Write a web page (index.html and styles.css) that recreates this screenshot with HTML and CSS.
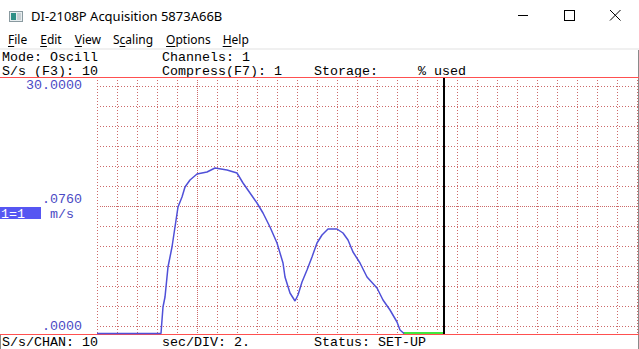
FILE: index.html
```html
<!DOCTYPE html>
<html>
<head>
	<meta charset="utf-8">
	<title>DI-2108P Acquisition 5873A66B</title>
	<link rel="stylesheet" href="styles.css">
</head>
<body>
	<div class="window">
		<header class="titlebar">
			<svg class="app_icon" width="14" height="11" viewBox="0 0 14 11">
				<rect x="0.5" y="0.5" width="13" height="10" fill="#e8eef0" stroke="#8a9aa0"/>
				<rect x="2" y="2" width="5" height="7" fill="#2f8f86"/>
				<rect x="8" y="2" width="4" height="7" fill="#c8d0d4"/>
			</svg>
			<span class="title">DI-2108P Acquisition 5873A66B</span>
			<div class="controls">
				<svg width="46" height="30" viewBox="0 0 46 30"><path d="M18 15.5h10" stroke="#000" stroke-width="1"/></svg>
				<svg width="46" height="30" viewBox="0 0 46 30"><rect x="18.5" y="10.5" width="10" height="10" fill="none" stroke="#000"/></svg>
				<svg width="46" height="30" viewBox="0 0 46 30"><path d="M18 10l10.5 10.5M28.5 10L18 20.5" stroke="#000" stroke-width="1"/></svg>
			</div>
		</header>

		<nav class="menubar">
			<ul>
				<li><u>F</u>ile</li>
				<li><u>E</u>dit</li>
				<li><u>V</u>iew</li>
				<li>S<u>c</u>aling</li>
				<li><u>O</u>ptions</li>
				<li><u>H</u>elp</li>
			</ul>
		</nav>

		<div class="client">
			<pre class="info">Mode: Oscill        Channels: 1
S/s (F3): 10        Compress(F7): 1    Storage:     % used</pre>

			<svg class="plot" width="639" height="258" viewBox="0 77 639 258">
				<g class="grid" id="grid"></g>
				<line x1="0" y1="77.5" x2="639" y2="77.5" class="rule"/>
				<line x1="0" y1="334.5" x2="639" y2="334.5" class="rule"/>
				<line x1="444" y1="78" x2="444" y2="334" stroke="#000" stroke-width="2"/>
				<line x1="403" y1="333" x2="443" y2="333" stroke="#40e840" stroke-width="2"/>
				<polyline class="trace" points="97,333.5 161,333.5 162,320 163,307 165,297 168,267 172,247 175,227 178,207 182,197 185,187 190,180 197,174 207,172 215,168 227,170 237,173 243,183 250,193 257,203 263,213 270,227 277,243 283,263 285,277 290,293 295,301 298,295 302,282 307,270 312,257 317,243 322,235 328,229 337,229 343,233 348,240 353,252 360,263 367,277 377,288 383,300 390,310 397,322 400,330 404,333.5"/>
				<text x="82" y="89" class="label" text-anchor="end">30.0000</text>
				<text x="82" y="203" class="label" text-anchor="end">.0760</text>
				<rect x="0" y="207" width="41" height="12" fill="#5656f2"/>
				<text x="1" y="218" class="label tag">1=1</text>
				<text x="50" y="218" class="label">m/s</text>
				<text x="82" y="330" class="label" text-anchor="end">.0000</text>
			</svg>

			<pre class="status">S/s/CHAN: 10        sec/DIV: 2.        Status: SET-UP</pre>
		</div>
	</div>

<script src="plot.js"></script>
</body>
</html>
```

FILE: styles.css
```css
*{margin: 0; padding: 0;}
body{background: #fff; overflow: hidden;}
.window{width: 639px; height: 349px; background: #fff;}

/* 标题栏 */
.titlebar{height: 31px; display: flex; align-items: center; font-family: "Noto Sans", sans-serif; font-size: 13px; color: #000;}
.app_icon{margin: 1px 8px 0 9px;}
.title{flex: 1; padding-top: 1px;}
.controls{display: flex; align-self: flex-start; margin-right: 1px;}
.controls svg{display: block;}

/* 菜单 */
.menubar{height: 17px; border-bottom: 2px solid #f0f0f0; font-family: "Noto Sans", sans-serif; font-size: 12px;}
.menubar ul{display: flex; list-style: none; padding-left: 8px; line-height: 18px;}
.menubar li{margin-right: 13px;}
.menubar li:nth-child(3){margin-right: 12px;}
.menubar li:nth-child(5){margin-right: 12px;}
.menubar u{text-decoration-thickness: 1px; text-underline-offset: 2px;}

.client{border-right: 1px solid #8a8a8a;}
.info,.status{font-family: "Liberation Mono", monospace; font-size: 13.33px; line-height: 14px; padding-left: 2px; color: #000;}
.info{height: 27px; padding-top: 1px; box-sizing: border-box;}
.plot{display: block; border-left: 1px solid #8a8a8a; margin-left: -1px;}
.status{height: 14px; padding-top: 1px; border-left: 1px solid #8a8a8a; padding-left: 1px;}

/* 示波器 */
.rule{stroke: #ff5050; stroke-width: 1;}
.grid line{stroke: #cc6a6a; stroke-width: 1; stroke-dasharray: 1 2;}
.grid line.dense{stroke-dasharray: 1 1;}
.trace{fill: none; stroke: #5050d8; stroke-width: 1.5; stroke-linejoin: bevel;}
.label{font-family: "Liberation Mono", monospace; font-size: 13.33px; fill: #4a4ac4;}
.tag{fill: #fff;}
```

FILE: plot.js
```js
// 画网格
var grid = document.getElementById('grid')
var ns = 'http://www.w3.org/2000/svg'

function addLine(x1, y1, x2, y2, dense) {
	var l = document.createElementNS(ns, 'line')
	l.setAttribute('x1', x1)
	l.setAttribute('y1', y1)
	l.setAttribute('x2', x2)
	l.setAttribute('y2', y2)
	if (dense) l.setAttribute('class', 'dense')
	grid.appendChild(l)
}

// 竖线
for (var x = 97; x <= 637; x += 20) {
	addLine(x + 0.5, 80, x + 0.5, 334, x == 197)
}
// 横线
for (var y = 86; y <= 326; y += 20) {
	addLine(100, y + 0.5, 638, y + 0.5, y == 206)
}
```
